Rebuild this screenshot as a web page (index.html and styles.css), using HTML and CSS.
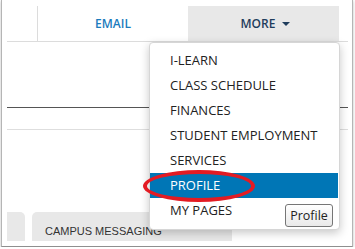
FILE: index.html
```html
<!DOCTYPE html>
<html lang="en">
<head>
  <meta charset="UTF-8" />
  <title>Portal - More menu</title>
  <link rel="stylesheet" href="styles.css">
</head>
<body>

  <div class="window">
    <!-- Top navigation -->
    <nav class="top-nav">
      <div class="nav-spacer"></div>
      <a class="nav-tab">EMAIL</a>
      <a class="nav-tab nav-tab-active">MORE <span class="caret"></span></a>
    </nav>

    <div class="rule-dark"></div>
    <div class="rule-light"></div>

    <!-- Bottom tabs -->
    <div class="bottom-tabs">
      <div class="tab-stub"></div>
      <div class="tab">CAMPUS MESSAGING</div>
    </div>

    <!-- Dropdown menu -->
    <ul class="dropdown">
      <li>I-LEARN</li>
      <li>CLASS SCHEDULE</li>
      <li>FINANCES</li>
      <li>STUDENT EMPLOYMENT</li>
      <li>SERVICES</li>
      <li class="selected">PROFILE</li>
      <li>MY PAGES</li>
    </ul>

    <div class="highlight-ring"></div>
    <div class="tooltip">Profile</div>
  </div>

</body>
</html>
```

FILE: styles.css
```css
body {
  margin: 0;
  background: #fff;
  font-family: "Open Sans", "Liberation Sans", sans-serif;
}
.window {
  position: relative;
  box-sizing: border-box;
  margin-left: 1px;
  width: 352px;
  height: 247px;
  padding: 6px 4px 0 5px;
  border-left: 1px solid #b5b5b5;
  border-right: 1px solid #b5b5b5;
  border-bottom: 1px solid #8f8f8f;
  box-shadow: 0 1px 3px rgba(0,0,0,0.25);
  overflow: hidden;
}
.top-nav {
  display: flex;
  height: 35px;
  border-bottom: 1px solid #dcdcdc;
}
.nav-spacer {
  width: 30px;
  border-right: 1px solid #dcdcdc;
}
.nav-tab {
  width: 150px;
  display: flex;
  align-items: center;
  justify-content: center;
  font-size: 12px;
  font-weight: 600;
  color: #1a7bbd;
}
.nav-tab-active {
  width: 151px;
  padding-left: 4px;
  box-sizing: border-box;
  background: #e8e8e8;
  color: #1f3d5c;
}
.caret {
  display: inline-block;
  margin-left: 7px;
  width: 0;
  height: 0;
  border-left: 4px solid transparent;
  border-right: 4px solid transparent;
  border-top: 4px solid #1f3d5c;
}
.rule-dark {
  margin-top: 65px;
  height: 1px;
  background: #555;
}
.rule-light {
  margin-top: 21px;
  height: 1px;
  background: #dedede;
}
.bottom-tabs {
  display: flex;
  gap: 7px;
  margin-top: 82px;
  height: 29px;
}
.tab-stub {
  width: 18px;
  background: #e8e8e8;
  border-radius: 0 5px 0 0;
}
.tab {
  width: 200px;
  box-sizing: border-box;
  padding: 13px 0 0 13px;
  background: #e8e8e8;
  border-radius: 5px 5px 0 0;
  font-family: "Liberation Sans", Arial, sans-serif;
  font-size: 11px;
  color: #333;
}
.dropdown {
  position: absolute;
  left: 147px;
  top: 42px;
  width: 191px;
  box-sizing: border-box;
  margin: 0;
  padding: 5px 1px 6px 0;
  list-style: none;
  background: #fff;
  border: 1px solid #d6d6d6;
  border-radius: 4px;
  box-shadow: 0 3px 10px rgba(0,0,0,0.22);
}
.dropdown li {
  height: 25px;
  line-height: 25px;
  padding-left: 20px;
  font-size: 13px;
  color: #222;
}
.dropdown li.selected {
  background: #0076b6;
  color: #fff;
}
.highlight-ring {
  position: absolute;
  left: 141px;
  top: 170px;
  width: 104px;
  height: 24px;
  border: 4px solid #e31b23;
  border-radius: 50%;
}
.tooltip {
  position: absolute;
  left: 283px;
  top: 204px;
  width: 46px;
  height: 21px;
  border: 1px solid #767676;
  border-radius: 3px;
  background: linear-gradient(#ffffff, #e9e9e9);
  font-size: 12.5px;
  line-height: 21px;
  text-align: center;
  color: #222;
}
```
